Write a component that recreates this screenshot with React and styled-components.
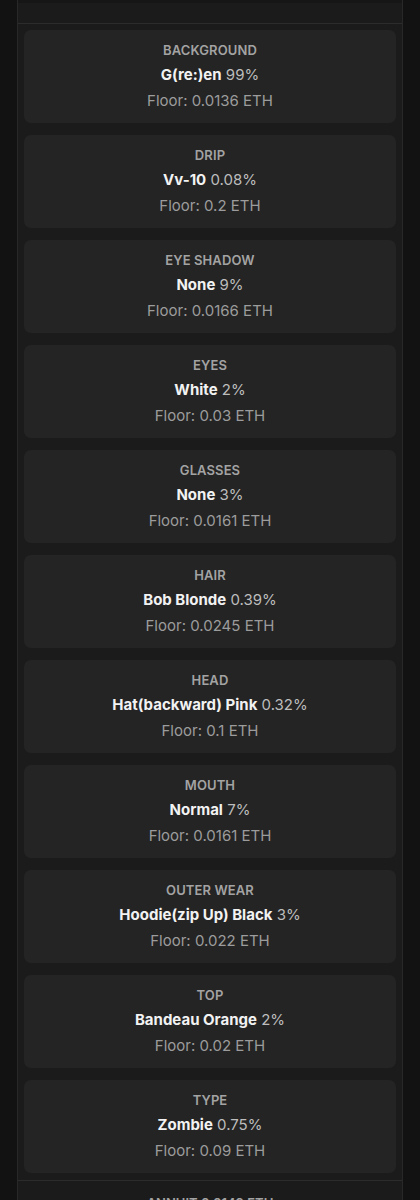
import React from 'react';
import styled, { createGlobalStyle } from 'styled-components';

const traits = [
  { type: 'BACKGROUND', value: 'G(re:)en', percent: '99%', floor: '0.0136' },
  { type: 'DRIP', value: 'Vv-10', percent: '0.08%', floor: '0.2' },
  { type: 'EYE SHADOW', value: 'None', percent: '9%', floor: '0.0166' },
  { type: 'EYES', value: 'White', percent: '2%', floor: '0.03' },
  { type: 'GLASSES', value: 'None', percent: '3%', floor: '0.0161' },
  { type: 'HAIR', value: 'Bob Blonde', percent: '0.39%', floor: '0.0245' },
  { type: 'HEAD', value: 'Hat(backward) Pink', percent: '0.32%', floor: '0.1' },
  { type: 'MOUTH', value: 'Normal', percent: '7%', floor: '0.0161' },
  { type: 'OUTER WEAR', value: 'Hoodie(zip Up) Black', percent: '3%', floor: '0.022' },
  { type: 'TOP', value: 'Bandeau Orange', percent: '2%', floor: '0.02' },
  { type: 'TYPE', value: 'Zombie', percent: '0.75%', floor: '0.09' },
];

const GlobalStyle = createGlobalStyle`
  html, body {
    margin: 0;
    padding: 0;
    background: #121212;
    height: 1200px;
    overflow: hidden;
  }
  body {
    font-family: Inter, "Noto Sans", sans-serif;
    -webkit-font-smoothing: antialiased;
  }
`;

const Page = styled.div`
  padding: 0 17px 0 17px;
`;

const Panel = styled.div`
  background: #1b1b1b;
  border-left: 1px solid #282828;
  border-right: 1px solid #282828;
`;

const PanelTop = styled.div`
  height: 23px;
  border-bottom: 1px solid #2c2c2c;
  border-top: 3px solid #161616;
  box-sizing: border-box;
  height: 24px;
`;

const TraitList = styled.div`
  display: flex;
  flex-direction: column;
  gap: 12px;
  padding: 6px 6px 7px;
  border-bottom: 1px solid #2c2c2c;
`;

const TraitCard = styled.div`
  background: #242424;
  border-radius: 7px;
  padding: 12px 16px 9px;
  display: flex;
  flex-direction: column;
  align-items: center;
  text-align: center;
`;

const TraitType = styled.div`
  font-size: 13px;
  line-height: 16px;
  font-weight: 600;
  color: #a3a3a3;
  letter-spacing: 0.1px;
`;

const TraitValue = styled.div`
  margin-top: 4px;
  font-size: 15px;
  line-height: 26px;
  color: #bdbdbd;
`;

const ValueName = styled.span`
  font-weight: 700;
  color: #f2f2f2;
`;

const Floor = styled.div`
  font-size: 15px;
  line-height: 26px;
  color: #9c9c9c;
`;

const NextSection = styled.div`
  padding: 14px 16px;
  text-align: center;
  font-size: 13px;
  font-weight: 600;
  color: #a3a3a3;
`;

const Trait = ({ type, value, percent, floor }) => (
  <TraitCard>
    <TraitType>{type}</TraitType>
    <TraitValue>
      <ValueName>{value}</ValueName> {percent}
    </TraitValue>
    <Floor>Floor: {floor} ETH</Floor>
  </TraitCard>
);

const App = () => {
  return (
    <>
      <GlobalStyle />
      <Page>
        <Panel>
          <PanelTop />
          <TraitList>
            {traits.map((t) => (
              <Trait key={t.type} {...t} />
            ))}
          </TraitList>
          <NextSection>ANNUIT 0.0149 ETH</NextSection>
        </Panel>
      </Page>
    </>
  );
};

export default App;
